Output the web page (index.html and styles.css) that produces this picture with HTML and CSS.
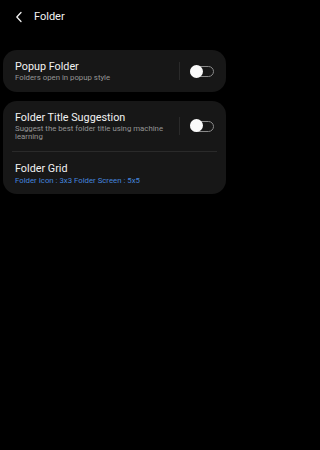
FILE: index.html
```html
<!DOCTYPE html>
<html>
<head>
<meta charset="utf-8">
<link rel="stylesheet" href="styles.css">
</head>
<body>
<div class="header">
  <svg class="back" width="8" height="12" viewBox="0 0 8 12"><path d="M6 1.5 L1.8 6 L6 10.5" fill="none" stroke="#f2f2f2" stroke-width="1.3" stroke-linecap="round" stroke-linejoin="round"/></svg>
  <span class="title">Folder</span>
</div>
<div class="card">
  <div class="row">
    <div class="text">
      <div class="label">Popup Folder</div>
      <div class="sub">Folders open in popup style</div>
    </div>
    <div class="vdiv"></div>
    <div class="toggle"><div class="thumb"></div></div>
  </div>
</div>
<div class="card">
  <div class="row">
    <div class="text">
      <div class="label">Folder Title Suggestion</div>
      <div class="sub">Suggest the best folder title using machine learning</div>
    </div>
    <div class="vdiv"></div>
    <div class="toggle"><div class="thumb"></div></div>
  </div>
  <div class="hdiv"></div>
  <div class="row">
    <div class="text">
      <div class="label">Folder Grid</div>
      <div class="sub blue">Folder Icon : 3x3 Folder Screen : 5x5</div>
    </div>
  </div>
</div>
</body>
</html>
```
FILE: styles.css
```css
html, body {
  margin: 0;
  padding: 0;
  background: #000;
}
body {
  width: 229px;
  height: 450px;
  font-family: Roboto, "Noto Sans", sans-serif;
  color: #f2f2f2;
}
.header {
  height: 34px;
  display: flex;
  align-items: center;
  padding-left: 15px;
}
.back {
  display: block;
}
.title {
  margin-left: 11px;
  font-size: 11px;
  line-height: 14px;
  color: #f2f2f2;
}
.card {
  margin: 16px 3px 0 3px;
  background: #171717;
  border-radius: 14px;
}
.card + .card {
  margin-top: 9px;
}
.row {
  display: flex;
  align-items: center;
  padding: 10px 12px 9px 12px;
}
.text {
  flex: 1;
  min-width: 0;
  padding-right: 8px;
}
.label {
  font-size: 10.8px;
  line-height: 13px;
  color: #f2f2f2;
}
.sub {
  margin-top: 1px;
  font-size: 7.8px;
  line-height: 8.5px;
  color: #959595;
}
.sub.blue {
  color: #4585de;
  line-height: 9px;
}
.vdiv {
  width: 1px;
  height: 18px;
  background: #2a2a2a;
  margin-right: 10px;
}
.toggle {
  position: relative;
  width: 24px;
  height: 11px;
  box-sizing: border-box;
  border: 1.2px solid #8a8a8a;
  border-radius: 6px;
}
.thumb {
  position: absolute;
  left: -1.2px;
  top: -2.2px;
  width: 13px;
  height: 13px;
  border-radius: 50%;
  background: #fafafa;
}
.hdiv {
  height: 1px;
  background: #2a2a2a;
  margin: 0 9px;
}
```
